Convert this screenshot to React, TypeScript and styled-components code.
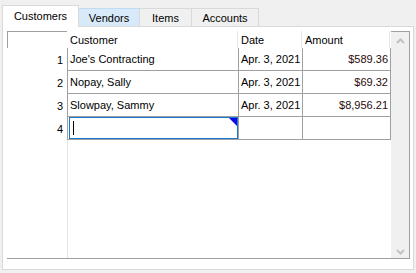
import React from 'react'
import styled, { createGlobalStyle } from 'styled-components'

const Global = createGlobalStyle`
  html, body {
    margin: 0;
    padding: 0;
    background: #f0f0f0;
  }
  body {
    font-family: "Liberation Sans", Arial, sans-serif;
    font-size: 11px;
    color: #000;
  }
`

const Window = styled.div`
  width: 416px;
  height: 273px;
  box-sizing: border-box;
  padding: 5px 2px 0 2px;
  background: #f0f0f0;
`

const TabBar = styled.div`
  display: flex;
  align-items: flex-end;
  height: 21px;
`

const Tab = styled.div<{ $w: number; $active?: boolean; $hover?: boolean }>`
  box-sizing: border-box;
  width: ${(p) => p.$w}px;
  height: ${(p) => (p.$active ? 22 : 18)}px;
  margin-bottom: ${(p) => (p.$active ? -1 : 0)}px;
  position: relative;
  z-index: ${(p) => (p.$active ? 2 : 1)};
  display: flex;
  align-items: center;
  justify-content: center;
  padding-bottom: ${(p) => (p.$active ? 2 : 0)}px;
  background: ${(p) => (p.$active ? '#fff' : p.$hover ? '#d8eaf9' : '#f0f0f0')};
  border: 1px solid #d9d9d9;
  border-left: ${(p) => (p.$active ? '1px solid #d9d9d9' : 'none')};
  border-bottom: none;
  border-top-color: ${(p) => (p.$hover ? '#c0dcf3' : '#d9d9d9')};
`

const Panel = styled.div`
  box-sizing: border-box;
  height: 244px;
  background: #fff;
  border: 1px solid #d9d9d9;
  padding: 4px 3px 10px 4px;
`

const Frame = styled.div`
  display: flex;
  height: 100%;
  box-sizing: border-box;
  border-right: 1px solid #a0a0a0;
  border-bottom: 1px solid #a0a0a0;
`

const RowHeaderCol = styled.div`
  width: 60px;
  display: flex;
  flex-direction: column;
`

const Corner = styled.div`
  box-sizing: border-box;
  height: 17px;
  border-top: 1px solid #a0a0a0;
  border-left: 1px solid #a0a0a0;
`

const RowNum = styled.div`
  box-sizing: border-box;
  height: 23px;
  display: flex;
  align-items: center;
  justify-content: flex-end;
  padding-right: 4px;
`

const DataArea = styled.div`
  width: 324px;
  display: flex;
  flex-direction: column;
`

const HeaderRow = styled.div`
  display: flex;
  height: 17px;
`

const HeadCell = styled.div<{ $w: number }>`
  box-sizing: border-box;
  width: ${(p) => p.$w}px;
  display: flex;
  align-items: center;
  padding-left: 3px;
  border-right: 1px solid #e5e5e5;
`

const Body = styled.div`
  flex: 1;
  border-left: 1px solid #e3e3e3;
`

const Row = styled.div`
  display: flex;
  height: 23px;
  box-sizing: border-box;
  margin-left: -1px;
  border-left: 1px solid #a0a0a0;
  border-bottom: 1px solid #a0a0a0;
`

const Cell = styled.div<{ $w: number; $right?: boolean; $money?: boolean; $edit?: boolean }>`
  box-sizing: border-box;
  width: ${(p) => p.$w}px;
  display: flex;
  align-items: center;
  justify-content: ${(p) => (p.$right ? 'flex-end' : 'flex-start')};
  padding: ${(p) => (p.$edit ? '0' : '0 2px')};
  border-right: 1px solid #a0a0a0;
  color: ${(p) => (p.$money ? '#2a0a0a' : '#000')};
  white-space: nowrap;
  overflow: hidden;
`

const EditBox = styled.div`
  position: relative;
  box-sizing: border-box;
  flex: 1;
  height: 100%;
  margin-left: 1px;
  border: 1px solid #1778d2;
  display: flex;
  align-items: center;
  padding-left: 3px;
`

const Caret = styled.div`
  width: 1px;
  height: 14px;
  background: #000;
`

const EditMark = styled.div`
  position: absolute;
  top: 0;
  right: 0;
  width: 0;
  height: 0;
  border-top: 8px solid #0a0ae6;
  border-left: 8px solid transparent;
`

const ScrollBar = styled.div`
  width: 18px;
  box-sizing: border-box;
  background: #f0f0f0;
  border-top: 1px solid #a0a0a0;
  display: flex;
  flex-direction: column;
  justify-content: space-between;
  align-items: center;
  padding: 6px 0 3px 0;
`

const Arrow = ({ up }: { up?: boolean }) => (
  <svg width="9" height="6" viewBox="0 0 9 6">
    <polyline
      points={up ? '1,5 4.5,1.5 8,5' : '1,1 4.5,4.5 8,1'}
      fill="none"
      stroke="#c2c2c2"
      strokeWidth="2"
    />
  </svg>
)

const rows = [
  { n: 1, name: "Joe's Contracting", date: 'Apr. 3, 2021', amount: '$589.36' },
  { n: 2, name: 'Nopay, Sally', date: 'Apr. 3, 2021', amount: '$69.32' },
  { n: 3, name: 'Slowpay, Sammy', date: 'Apr. 3, 2021', amount: '$8,956.21' },
]

export default function App() {
  return (
    <Window>
      <Global />
      <TabBar>
        <Tab $w={77} $active>Customers</Tab>
        <Tab $w={61} $hover>Vendors</Tab>
        <Tab $w={52}>Items</Tab>
        <Tab $w={67}>Accounts</Tab>
      </TabBar>
      <Panel>
        <Frame>
          <RowHeaderCol>
            <Corner />
            {rows.map((r) => (
              <RowNum key={r.n}>{r.n}</RowNum>
            ))}
            <RowNum>4</RowNum>
          </RowHeaderCol>
          <DataArea>
            <HeaderRow>
              <HeadCell $w={171}>Customer</HeadCell>
              <HeadCell $w={64}>Date</HeadCell>
              <HeadCell $w={88}>Amount</HeadCell>
            </HeaderRow>
            <Body>
              {rows.map((r) => (
                <Row key={r.n}>
                  <Cell $w={171}>{r.name}</Cell>
                  <Cell $w={64}>{r.date}</Cell>
                  <Cell $w={88} $right $money>{r.amount}</Cell>
                </Row>
              ))}
              <Row>
                <Cell $w={171} $edit>
                  <EditBox>
                    <Caret />
                    <EditMark />
                  </EditBox>
                </Cell>
                <Cell $w={64} />
                <Cell $w={88} />
              </Row>
            </Body>
          </DataArea>
          <ScrollBar>
            <Arrow up />
            <Arrow />
          </ScrollBar>
        </Frame>
      </Panel>
    </Window>
  )
}
